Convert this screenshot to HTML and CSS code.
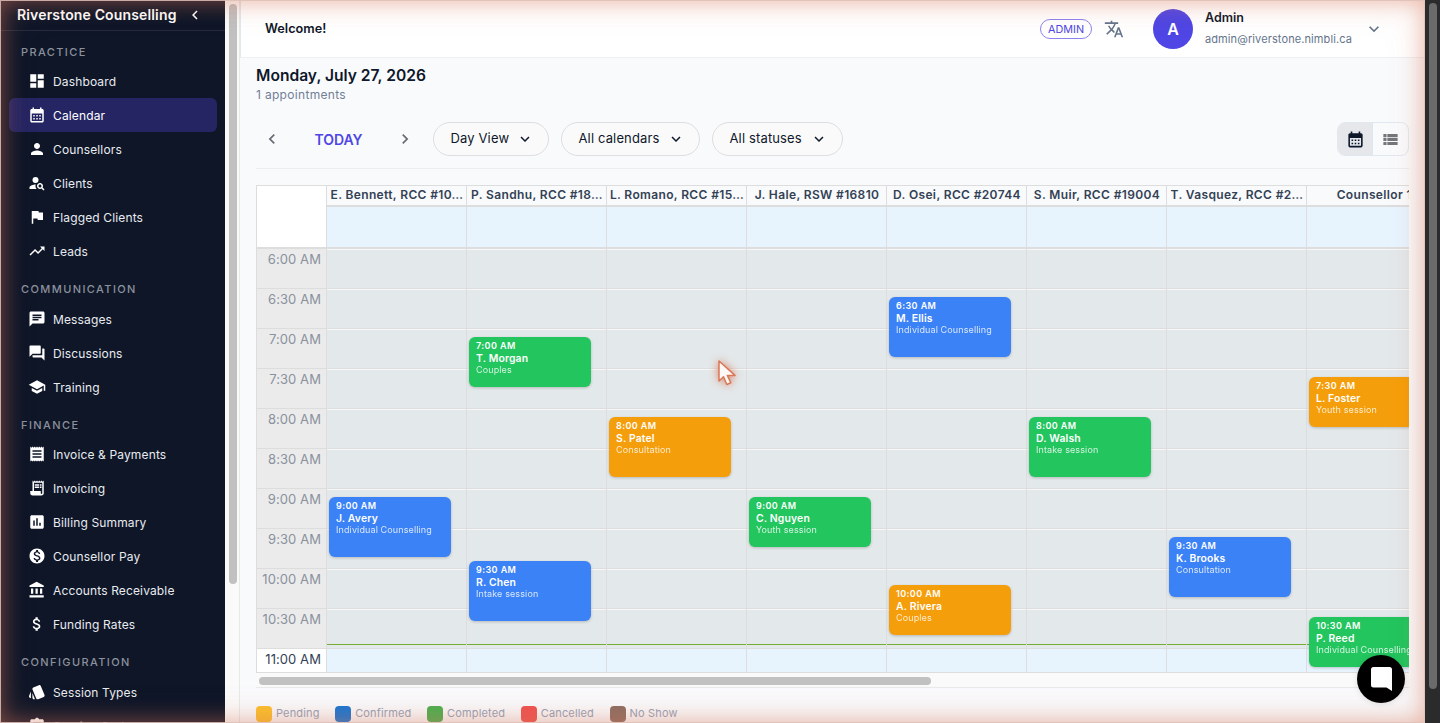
FILE: index.html
```html
<!DOCTYPE html>
<html lang="en">
<head>
  <meta charset="UTF-8">
  <title>Calendar - Riverstone Counselling</title>
  <link rel="stylesheet" href="styles.css">
</head>
<body>
  <div class="app">
    <aside class="sidebar">
      <div class="sidebar-menu">
        <div class="brand">
          <span>Riverstone Counselling</span>
          <svg viewBox="0 0 24 24"><path d="M15.41 7.41 14 6l-6 6 6 6 1.41-1.41L10.83 12z"/></svg>
        </div>
        <h4>Practice</h4>
        <a class="nav-item"><svg viewBox="0 0 24 24"><path d="M3 13h8V3H3v10zm0 8h8v-6H3v6zm10 0h8V11h-8v10zm0-18v6h8V3h-8z"/></svg>Dashboard</a>
        <a class="nav-item active"><svg viewBox="0 0 24 24"><path d="M19 4h-1V2h-2v2H8V2H6v2H5c-1.11 0-1.99.9-1.99 2L3 20c0 1.100.89 2 2 2h14c1.100 0 2-.9 2-2V6c0-1.100-.9-2-2-2zm0 16H5V10h14v10zM9 14H7v-2h2v2zm4 0h-2v-2h2v2zm4 0h-2v-2h2v2zm-8 4H7v-2h2v2zm4 0h-2v-2h2v2zm4 0h-2v-2h2v2z"/></svg>Calendar</a>
        <a class="nav-item"><svg viewBox="0 0 24 24"><path d="M12 12c2.210 0 4-1.790 4-4s-1.790-4-4-4-4 1.790-4 4 1.790 4 4 4zm0 2c-2.670 0-8 1.340-8 4v2h16v-2c0-2.660-5.330-4-8-4z"/></svg>Counsellors</a>
        <a class="nav-item"><svg viewBox="0 0 24 24"><circle cx="10" cy="8" r="4"/><path d="M10.350 14.010C7.620 13.910 2 15.270 2 18v2h9.540c-2.470-2.760-1.230-5.890-1.190-5.990zM19.430 18.020c.360-.59.57-1.280.57-2.020 0-2.210-1.790-4-4-4s-4 1.790-4 4 1.790 4 4 4c.74 0 1.430-.22 2.020-.57L20.590 22 22 20.590l-2.570-2.570zM16 18c-1.100 0-2-.9-2-2s.9-2 2-2 2 .9 2 2-.9 2-2 2z"/></svg>Clients</a>
        <a class="nav-item"><svg viewBox="0 0 24 24"><path d="M14.400 6 14 4H5v17h2v-7h5.600l.4 2h7V6z"/></svg>Flagged Clients</a>
        <a class="nav-item"><svg viewBox="0 0 24 24"><path d="m16 6 2.290 2.290-4.880 4.880-4-4L2 16.590 3.410 18l6-6 4 4 6.300-6.290L22 12V6z"/></svg>Leads</a>

        <h4>Communication</h4>
        <a class="nav-item"><svg viewBox="0 0 24 24"><path d="M20 2H4c-1.100 0-1.990.9-1.990 2L2 22l4-4h14c1.100 0 2-.9 2-2V4c0-1.100-.9-2-2-2zM6 9h12v2H6V9zm8 5H6v-2h8v2zm4-6H6V6h12v2z"/></svg>Messages</a>
        <a class="nav-item"><svg viewBox="0 0 24 24"><path d="M21 6h-2v9H6v2c0 .55.45 1 1 1h11l4 4V7c0-.55-.45-1-1-1zm-4 6V3c0-.55-.45-1-1-1H3c-.55 0-1 .45-1 1v14l4-4h10c.55 0 1-.45 1-1z"/></svg>Discussions</a>
        <a class="nav-item"><svg viewBox="0 0 24 24"><path d="M5 13.180v4L12 21l7-3.820v-4L12 17l-7-3.820zM12 3 1 9l11 6 9-4.910V17h2V9L12 3z"/></svg>Training</a>

        <h4 class="tight">Finance</h4>
        <a class="nav-item"><svg viewBox="0 0 24 24"><path d="M18 17H6v-2h12v2zm0-4H6v-2h12v2zm0-4H6V7h12v2zM3 22l1.500-1.500L6 22l1.500-1.500L9 22l1.500-1.500L12 22l1.500-1.500L15 22l1.500-1.500L18 22l1.500-1.500L21 22V2l-1.500 1.500L18 2l-1.500 1.500L15 2l-1.500 1.500L12 2l-1.500 1.500L9 2 7.500 3.500 6 2 4.500 3.500 3 2v20z"/></svg>Invoice &amp; Payments</a>
        <a class="nav-item"><svg viewBox="0 0 24 24"><path d="M19.500 3.500 18 2l-1.500 1.500L15 2l-1.500 1.500L12 2l-1.500 1.500L9 2 7.500 3.500 6 2v14H3v3c0 1.660 1.340 3 3 3h12c1.660 0 3-1.340 3-3V2l-1.500 1.500zM19 19c0 .55-.45 1-1 1s-1-.45-1-1v-3H8V5h11v14z"/><path d="M9 7h6v2H9zM16 7h2v2h-2zM9 10h6v2H9zM16 10h2v2h-2z"/></svg>Invoicing</a>
        <a class="nav-item"><svg viewBox="0 0 24 24"><path d="M19 3H5c-1.100 0-2 .9-2 2v14c0 1.100.9 2 2 2h14c1.100 0 2-.9 2-2V5c0-1.100-.9-2-2-2zM9 17H7v-7h2v7zm4 0h-2V7h2v10zm4 0h-2v-4h2v4z"/></svg>Billing Summary</a>
        <a class="nav-item"><svg viewBox="0 0 24 24"><path d="M12 2C6.480 2 2 6.480 2 12s4.480 10 10 10 10-4.480 10-10S17.520 2 12 2zm1.410 16.090V20h-2.670v-1.930c-1.710-.36-3.160-1.460-3.270-3.400h1.960c.1 1.050.82 1.870 2.650 1.870 1.960 0 2.400-.98 2.400-1.590 0-.83-.44-1.610-2.670-2.140-2.480-.6-4.180-1.620-4.180-3.670 0-1.720 1.390-2.840 3.110-3.210V4h2.670v1.950c1.860.45 2.790 1.860 2.850 3.390H14.300c-.05-1.110-.64-1.870-2.220-1.870-1.500 0-2.400.68-2.400 1.640 0 .84.65 1.390 2.670 1.910s4.180 1.390 4.180 3.910c-.01 1.830-1.380 2.830-3.120 3.160z"/></svg>Counsellor Pay</a>
        <a class="nav-item"><svg viewBox="0 0 24 24"><path d="M4 10v7h3v-7H4zm6 0v7h3v-7h-3zM2 22h19v-3H2v3zm14-12v7h3v-7h-3zm-4.500-9L2 6v2h19V6l-9.500-5z"/></svg>Accounts Receivable</a>
        <a class="nav-item"><svg viewBox="0 0 24 24"><path d="M11.800 10.900c-2.270-.59-3-1.200-3-2.150 0-1.090 1.010-1.850 2.700-1.850 1.780 0 2.440.85 2.500 2.100h2.210c-.07-1.720-1.120-3.300-3.210-3.810V3h-3v2.160c-1.940.42-3.500 1.680-3.500 3.610 0 2.310 1.910 3.460 4.700 4.130 2.500.6 3 1.480 3 2.410 0 .69-.49 1.790-2.700 1.790-2.060 0-2.870-.92-2.980-2.100h-2.200c.12 2.190 1.760 3.420 3.680 3.830V21h3v-2.150c1.950-.37 3.500-1.500 3.500-3.550 0-2.840-2.430-3.810-4.700-4.400z"/></svg>Funding Rates</a>

        <h4>Configuration</h4>
        <a class="nav-item"><svg viewBox="0 0 24 24"><path d="m2.530 19.650 1.340.56v-9.030l-2.430 5.860c-.41 1.020.08 2.190 1.090 2.610zm19.500-3.700L17.070 3.980c-.31-.75-1.040-1.210-1.810-1.230-.26 0-.53.04-.79.15L7.100 5.950c-.75.31-1.210 1.030-1.230 1.800-.01.27.04.54.15.8l4.960 11.970c.31.76 1.050 1.220 1.830 1.230.26 0 .52-.05.77-.15l7.360-3.050c1.020-.42 1.510-1.590 1.090-2.600zM5.880 19.750c0 1.100.9 2 2 2h1.450l-3.450-8.340v6.340z"/></svg>Session Types</a>
        <a class="nav-item"><svg viewBox="0 0 24 24"><path d="M19 3h-4.180C14.400 1.840 13.300 1 12 1s-2.400.84-2.820 2H5c-1.100 0-2 .9-2 2v14c0 1.100.9 2 2 2h14c1.100 0 2-.9 2-2V5c0-1.100-.9-2-2-2zm-5 14H7v-2h7v2zm3-4H7v-2h10v2zm0-4H7V7h10v2z"/></svg>Service Codes</a>
      </div>
      <div class="side-scroll"><div class="thumb"></div></div>
    </aside>

    <main>
      <header class="topbar">
        <div class="welcome">Welcome!</div>
        <span class="role">ADMIN</span>
        <svg class="translate" viewBox="0 0 24 24"><path d="m12.870 15.070-2.540-2.510.03-.03c1.740-1.940 2.980-4.170 3.710-6.530H17V4h-7V2H8v2H1v1.990h11.170C11.500 7.920 10.440 9.750 9 11.350 8.070 10.320 7.300 9.190 6.690 8h-2c.73 1.630 1.730 3.170 2.980 4.560l-5.090 5.020L4 19l5-5 3.110 3.110.76-2.040zM18.500 10h-2L12 22h2l1.120-3h4.750L21 22h2l-4.500-12zm-2.620 7 1.620-4.330L19.120 17h-3.240z"/></svg>
        <div class="avatar">A</div>
        <div class="user">
          <b>Admin</b>
          <span>admin@riverstone.nimbli.ca</span>
        </div>
        <svg class="user-arrow" viewBox="0 0 24 24"><path d="M7.410 8.590 12 13.170l4.590-4.580L18 10l-6 6-6-6z"/></svg>
      </header>

      <section class="content">
        <h1>Monday, July 27, 2026</h1>
        <p class="count">1 appointments</p>

        <div class="toolbar">
          <svg class="arrow" viewBox="0 0 24 24"><path d="M15.410 7.410 14 6l-6 6 6 6 1.410-1.410L10.830 12z"/></svg>
          <span class="today">TODAY</span>
          <svg class="arrow" viewBox="0 0 24 24"><path d="M10 6 8.590 7.410 13.170 12l-4.580 4.590L10 18l6-6z"/></svg>
          <button class="pill day-view">Day View <svg viewBox="0 0 24 24"><path d="M7.410 8.590 12 13.170l4.590-4.580L18 10l-6 6-6-6z"/></svg></button>
          <button class="pill calendars">All calendars <svg viewBox="0 0 24 24"><path d="M7.410 8.590 12 13.170l4.590-4.580L18 10l-6 6-6-6z"/></svg></button>
          <button class="pill statuses">All statuses <svg viewBox="0 0 24 24"><path d="M7.410 8.590 12 13.170l4.590-4.580L18 10l-6 6-6-6z"/></svg></button>
          <div class="toggle">
            <span class="on"><svg viewBox="0 0 24 24"><path d="M19 4h-1V2h-2v2H8V2H6v2H5c-1.110 0-1.990.9-1.990 2L3 20c0 1.100.89 2 2 2h14c1.100 0 2-.9 2-2V6c0-1.100-.9-2-2-2zm0 16H5V10h14v10zM9 14H7v-2h2v2zm4 0h-2v-2h2v2zm4 0h-2v-2h2v2zm-8 4H7v-2h2v2zm4 0h-2v-2h2v2zm4 0h-2v-2h2v2z"/></svg></span>
            <span><svg viewBox="0 0 24 24"><path d="M3 14h4v-4H3v4zm0 5h4v-4H3v4zM3 9h4V5H3v4zm5 5h13v-4H8v4zm0 5h13v-4H8v4zM8 5v4h13V5H8z"/></svg></span>
          </div>
        </div>

        <div class="calendar">
          <div class="grid">
            <div class="times">
              <div class="corner"></div>
              <div class="slot">6:00 AM</div>
              <div class="slot">6:30 AM</div>
              <div class="slot">7:00 AM</div>
              <div class="slot">7:30 AM</div>
              <div class="slot">8:00 AM</div>
              <div class="slot">8:30 AM</div>
              <div class="slot">9:00 AM</div>
              <div class="slot">9:30 AM</div>
              <div class="slot">10:00 AM</div>
              <div class="slot">10:30 AM</div>
              <div class="slot open">11:00 AM</div>
            </div>
            <div class="column">
              <div class="name">E. Bennett, RCC #10…</div>
              <div class="allday"></div>
              <div class="day">
                <div class="event blue at-900 h60"><b>9:00 AM</b><strong>J. Avery</strong><span>Individual Counselling</span></div>
              </div>
            </div>
            <div class="column">
              <div class="name">P. Sandhu, RCC #18…</div>
              <div class="allday"></div>
              <div class="day">
                <div class="event green at-700 h50"><b>7:00 AM</b><strong>T. Morgan</strong><span>Couples</span></div>
                <div class="event blue at-930b h60"><b>9:30 AM</b><strong>R. Chen</strong><span>Intake session</span></div>
              </div>
            </div>
            <div class="column">
              <div class="name">L. Romano, RCC #15…</div>
              <div class="allday"></div>
              <div class="day">
                <div class="event orange at-800 h60"><b>8:00 AM</b><strong>S. Patel</strong><span>Consultation</span></div>
              </div>
            </div>
            <div class="column">
              <div class="name">J. Hale, RSW #16810</div>
              <div class="allday"></div>
              <div class="day">
                <div class="event green at-900 h50"><b>9:00 AM</b><strong>C. Nguyen</strong><span>Youth session</span></div>
              </div>
            </div>
            <div class="column">
              <div class="name">D. Osei, RCC #20744</div>
              <div class="allday"></div>
              <div class="day">
                <div class="event blue at-630 h60"><b>6:30 AM</b><strong>M. Ellis</strong><span>Individual Counselling</span></div>
                <div class="event orange at-1000 h50"><b>10:00 AM</b><strong>A. Rivera</strong><span>Couples</span></div>
              </div>
            </div>
            <div class="column">
              <div class="name">S. Muir, RCC #19004</div>
              <div class="allday"></div>
              <div class="day">
                <div class="event green at-800 h60"><b>8:00 AM</b><strong>D. Walsh</strong><span>Intake session</span></div>
              </div>
            </div>
            <div class="column">
              <div class="name">T. Vasquez, RCC #2…</div>
              <div class="allday"></div>
              <div class="day">
                <div class="event blue at-930 h60"><b>9:30 AM</b><strong>K. Brooks</strong><span>Consultation</span></div>
              </div>
            </div>
            <div class="column">
              <div class="name">Counsellor 11</div>
              <div class="allday"></div>
              <div class="day">
                <div class="event orange at-730 h50"><b>7:30 AM</b><strong>L. Foster</strong><span>Youth session</span></div>
                <div class="event green at-1030 h50"><b>10:30 AM</b><strong>P. Reed</strong><span>Individual Counselling</span></div>
              </div>
            </div>
          </div>
          <div class="cal-scroll"><div class="thumb"></div></div>
        </div>

        <div class="legend">
          <span><i class="pending"></i>Pending</span>
          <span><i class="confirmed"></i>Confirmed</span>
          <span><i class="completed"></i>Completed</span>
          <span><i class="cancelled"></i>Cancelled</span>
          <span><i class="noshow"></i>No Show</span>
        </div>
      </section>
    </main>

    <div class="page-scroll"><div class="thumb"></div></div>
  </div>

  <button class="chat"><svg viewBox="0 0 21 24"><path d="M2.500 0h16A2.500 2.500 0 0 1 21 2.500V24l-5.500-3.500h-13A2.500 2.500 0 0 1 0 18V2.500A2.500 2.500 0 0 1 2.500 0z"/></svg></button>
  <svg class="cursor" viewBox="0 0 18 26"><path d="M1 1v20l4.500-4.200 3.300 7.700 4-1.700-3.400-7.400H17z"/></svg>
  <div class="glow"></div>
</body>
</html>
```
FILE: styles.css
```css
* {
  box-sizing: border-box;
}

body {
  margin: 0;
  height: 723px;
  overflow: hidden;
  background: #f9fafc;
  font-family: Inter, sans-serif;
  color: #0f172a;
}

h1, h4, p {
  margin: 0;
}

svg {
  fill: currentColor;
  flex: none;
}

button {
  font-family: inherit;
}

.app {
  display: flex;
  height: 723px;
}

/* Sidebar */
.sidebar {
  display: flex;
  width: 240px;
  flex: none;
  overflow: hidden;
}

.sidebar-menu {
  width: 225px;
  height: 723px;
  overflow: hidden;
  background: #0e1628;
  color: #e9ebef;
}

.brand {
  display: flex;
  align-items: center;
  height: 31px;
  padding: 0 0 1px 17px;
  border-bottom: 1px solid #262c3d;
  font-size: 14px;
  font-weight: 600;
  letter-spacing: 0.15px;
  color: #fff;
}

.brand svg {
  width: 18px;
  height: 18px;
  margin-left: 9px;
}

.sidebar h4 {
  height: 34px;
  padding: 14px 0 0 21px;
  font-size: 11px;
  line-height: 14px;
  font-weight: 500;
  letter-spacing: 1.4px;
  text-transform: uppercase;
  color: #8c919c;
}

.sidebar .brand + h4 {
  height: 33.4px;
}

.sidebar h4.tight {
  height: 33px;
}

.nav-item {
  display: flex;
  align-items: center;
  height: 34px;
  margin: 0 8px 0 9px;
  padding-left: 19px;
  border-radius: 6px;
  font-size: 12px;
  letter-spacing: 0.14px;
}

.nav-item svg {
  width: 18px;
  height: 18px;
  margin-right: 7px;
  color: #fff;
}

.nav-item.active {
  background: #252563;
  color: #fff;
}

.side-scroll {
  width: 15px;
  padding: 4px 3px 0 4px;
  background: #fafafa;
  border-right: 1px solid #e8e8e8;
}

.side-scroll .thumb {
  width: 8px;
  height: 580px;
  border-radius: 4px;
  background: #c1c1c1;
}

main {
  flex: 1;
  min-width: 0;
}

.page-scroll {
  width: 15px;
  padding: 3px 3px 0 4px;
  background: #2b2b2b;
}

.page-scroll .thumb {
  width: 8px;
  height: 686px;
  border-radius: 4px;
  background: #6b6b6b;
}

/* Top bar */
.topbar {
  display: flex;
  align-items: center;
  height: 58px;
  padding: 0 41px 0 24px;
  background: #fff;
  border-bottom: 1px solid #eef0f2;
  border-left: 1px solid #e2e8f0;
}

.welcome {
  flex: 1;
  padding-bottom: 1px;
  font-size: 12.7px;
  font-weight: 600;
}

.role {
  width: 52px;
  height: 20px;
  border: 1px solid #8b84f0;
  border-radius: 10px;
  font-size: 10.8px;
  line-height: 19px;
  text-align: center;
  color: #4f46e5;
}

.translate {
  width: 20px;
  height: 20px;
  margin: 0 29px 0 12px;
  color: #64748b;
}

.avatar {
  width: 40px;
  height: 40px;
  border-radius: 50%;
  background: #4f46e5;
  color: #fff;
  font-size: 16px;
  font-weight: 600;
  line-height: 40px;
  text-align: center;
}

.user {
  width: 147px;
  margin: 0 12px;
  white-space: nowrap;
}

.user b {
  display: block;
  font-size: 12.5px;
  font-weight: 600;
  line-height: 21px;
}

.user span {
  display: block;
  margin-top: 1px;
  font-size: 11px;
  line-height: 21px;
  letter-spacing: 0.1px;
  color: #64748b;
}

.user-arrow {
  width: 20px;
  height: 20px;
  color: #64748b;
}

/* Page heading and toolbar */
.content {
  padding: 8px 16px 0;
}

h1 {
  font-size: 15.6px;
  font-weight: 600;
  line-height: 20px;
}

.count {
  font-size: 12px;
  line-height: 17px;
  letter-spacing: 0.32px;
  color: #718096;
}

.toolbar {
  display: flex;
  align-items: center;
  height: 66px;
  padding-top: 7px;
  border-bottom: 1px solid #eceef0;
}

.arrow {
  width: 20px;
  height: 20px;
  margin: 0 6px;
  color: #666b73;
}

.today {
  width: 101px;
  font-size: 14px;
  font-weight: 600;
  text-align: center;
  color: #4f46e5;
}

.pill {
  display: flex;
  align-items: center;
  justify-content: space-between;
  height: 34px;
  margin-left: 12px;
  padding: 0 14px 2px 16.5px;
  border: 1px solid #dcdee1;
  border-radius: 17px;
  background: #fafafb;
  font-size: 13px;
  letter-spacing: 0.14px;
  color: #0f172a;
}

.pill svg {
  width: 18px;
  height: 18px;
  margin-top: 2px;
}

.day-view {
  width: 116px;
}

.calendars {
  width: 139px;
}

.statuses {
  width: 131px;
}

.toggle {
  display: flex;
  width: 72px;
  height: 34px;
  margin-left: auto;
  border: 1px solid #e2e8f0;
  border-radius: 8px;
  overflow: hidden;
  color: #747679;
}

.toggle span {
  width: 35px;
  display: flex;
  align-items: center;
  justify-content: center;
}

.toggle .on {
  background: #e5e7eb;
  border-right: 1px solid #dbe6f2;
  color: #0f172a;
}

.toggle svg {
  width: 19px;
  height: 19px;
}

/* Calendar */
.calendar {
  margin-top: 16px;
  border-bottom: 1px solid #e8eaec;
  overflow: hidden;
}

.grid {
  display: flex;
  height: 488px;
  border: 1px solid #ddd;
  border-right: 0;
  overflow: hidden;
}

.times {
  width: 69px;
  flex: none;
}

.corner {
  height: 63px;
  background: #fff;
  border-bottom: 2px solid #ddd;
}

.slot {
  height: 40px;
  padding-right: 5px;
  border-bottom: 1px solid #ddd;
  background: #ebebeb;
  font-size: 13px;
  line-height: 20px;
  letter-spacing: 0.08px;
  text-align: right;
  color: #89919d;
}

.slot.open {
  background: #fff;
  color: #334155;
}

.column {
  width: 140px;
  flex: none;
  border-left: 1px solid #ddd;
}

.name {
  height: 21px;
  padding-left: 1px;
  border-bottom: 2px solid #ddd;
  font-size: 12px;
  font-weight: 600;
  letter-spacing: 0.36px;
  line-height: 18px;
  text-align: center;
  white-space: nowrap;
  color: #334155;
}

.allday {
  height: 42px;
  background: #e7f4fe;
  border-bottom: 2px solid #ddd;
}

/* half-hour rows, then the open hours and the current time line */
.day {
  position: relative;
  height: 424px;
  background:
    linear-gradient(#74ad31, #74ad31) 0 395px / 100% 1px no-repeat,
    linear-gradient(#e7f4fe, #e7f4fe) 0 400px / 100% 24px no-repeat,
    repeating-linear-gradient(#f6f7f8 0 1px, #e3e8ea 1px 39px, #ddd 39px 40px);
}

.event {
  position: absolute;
  left: 2px;
  width: 122px;
  padding: 3px 7px;
  border-radius: 6px;
  box-shadow: 0 1px 3px rgba(0, 0, 0, 0.2);
  color: #fff;
  white-space: nowrap;
}

.event b,
.event strong,
.event span {
  display: block;
  font-weight: 600;
}

.event b {
  font-size: 9px;
  line-height: 12px;
  letter-spacing: 0.42px;
}

.event strong {
  font-size: 10.4px;
  line-height: 13px;
  letter-spacing: 0.15px;
}

.event span {
  font-size: 9px;
  font-weight: 400;
  line-height: 10px;
  letter-spacing: 0.12px;
  opacity: 0.8;
}

.blue { background: #3b82f6; }
.green { background: #22c55e; }
.orange { background: #f59e0b; }

.h50 { height: 50px; }
.h60 { height: 60px; }

.at-630 { top: 48px; }
.at-700 { top: 88px; }
.at-730 { top: 128px; }
.at-800 { top: 168px; }
.at-900 { top: 248px; }
.at-930 { top: 288px; }
.at-930b { top: 312px; }
.at-1000 { top: 336px; }
.at-1030 { top: 368px; }

.cal-scroll {
  height: 14px;
  padding: 4px 3px;
  background: #fafafa;
}

.cal-scroll .thumb {
  width: 672px;
  height: 8px;
  border-radius: 4px;
  background: #c1c1c1;
}

.legend {
  display: flex;
  gap: 15.6px;
  margin-top: 18px;
  font-size: 11px;
  line-height: 15px;
  letter-spacing: 0.15px;
  color: #94a3b8;
}

.legend span {
  display: flex;
}

.legend i {
  width: 16px;
  height: 16px;
  margin-right: 4px;
  border-radius: 4px;
}

.pending { background: #fbc02d; }
.confirmed { background: #1976d2; }
.completed { background: #4caf50; }
.cancelled { background: #ef5350; }
.noshow { background: #8d6e63; }

/* Things floating over the page */
.chat {
  position: absolute;
  left: 1357px;
  top: 655px;
  width: 48px;
  height: 48px;
  padding: 0;
  border: 0;
  border-radius: 50%;
  background: #000;
  color: #fff;
  box-shadow: 0 1px 6px rgba(0, 0, 0, 0.1);
}

.chat svg {
  display: block;
  width: 21px;
  height: 24px;
  margin: 0 auto;
}

.cursor {
  position: absolute;
  left: 718px;
  top: 360px;
  width: 18px;
  height: 26px;
  fill: #fcf8f5;
  stroke: #d97757;
  stroke-width: 1.5;
  stroke-linejoin: round;
  overflow: visible;
  filter: drop-shadow(0 0 4px rgba(217, 119, 87, 0.9));
}

.glow {
  position: absolute;
  left: 0;
  top: 0;
  width: 1425px;
  height: 723px;
  border: 1px solid rgba(222, 188, 180, 0.9);
  box-shadow:
    inset 0 0 22px rgba(217, 119, 87, 0.5),
    inset 0 0 40px rgba(217, 119, 87, 0.12);
  pointer-events: none;
}
```
